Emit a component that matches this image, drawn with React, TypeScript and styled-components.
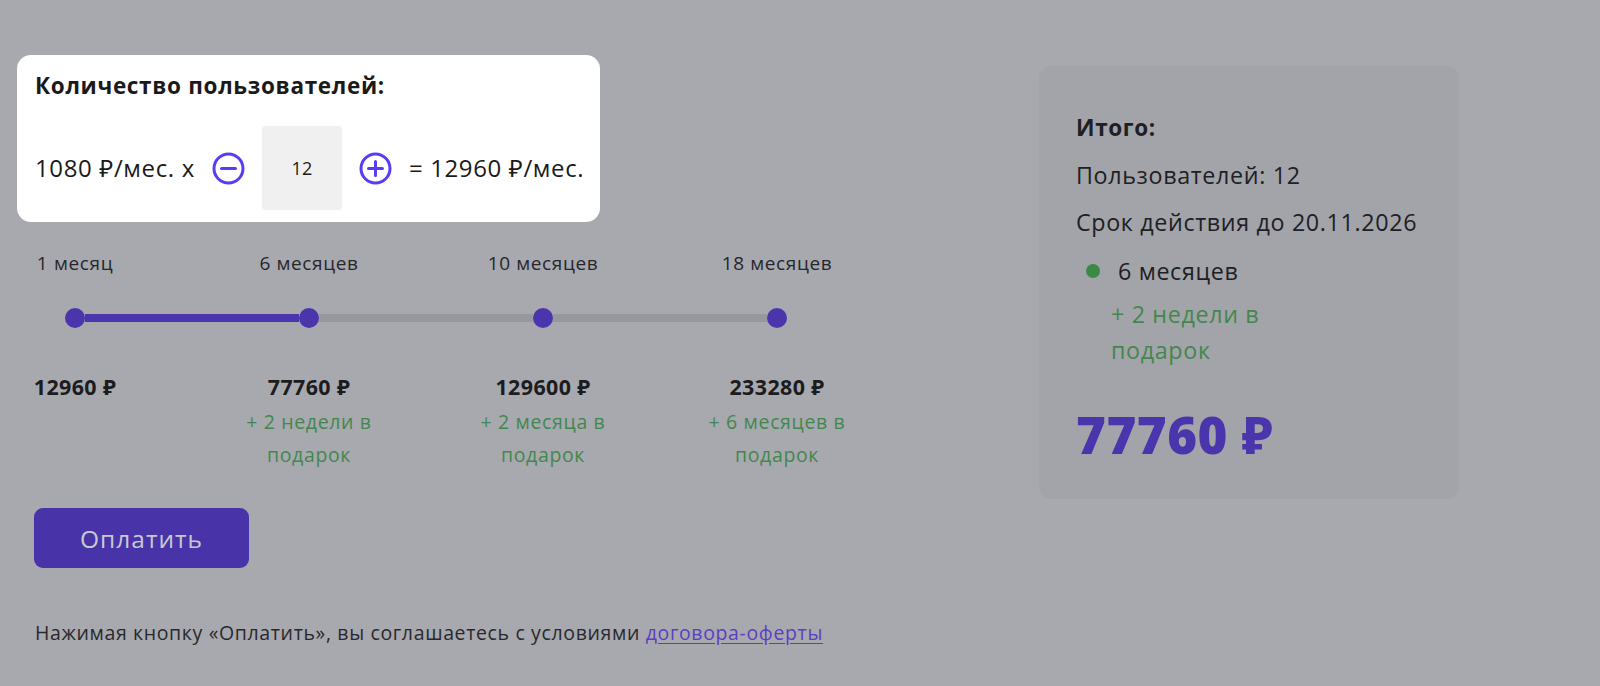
import React from 'react'
import styled, { createGlobalStyle } from 'styled-components'

const PURPLE = '#4a35ad'
const ICON = '#5b3cf5'
const GREEN = '#43874d'
const TEXT = '#202024'

const steps = [
    { label: '1 месяц', price: '12960 ₽', gift: '' },
    { label: '6 месяцев', price: '77760 ₽', gift: '+ 2 недели в подарок' },
    { label: '10 месяцев', price: '129600 ₽', gift: '+ 2 месяца в подарок' },
    { label: '18 месяцев', price: '233280 ₽', gift: '+ 6 месяцев в подарок' },
]
const activeStep = 1

const GlobalStyle = createGlobalStyle`
    html, body {
        margin: 0;
        padding: 0;
        background: #a8a9ae;
    }
    body {
        font-family: "Open Sans", "Noto Sans", sans-serif;
        letter-spacing: 0.04em;
        color: ${TEXT};
        height: 686px;
        overflow: hidden;
    }
`

const MinusIcon = () => (
    <svg width="33" height="33" viewBox="0 0 33 33" fill="none">
        <circle cx="16.5" cy="16.5" r="14.5" stroke={ICON} strokeWidth="3" />
        <path d="M9.5 16.5h14" stroke={ICON} strokeWidth="3" strokeLinecap="round" />
    </svg>
)

const PlusIcon = () => (
    <svg width="33" height="33" viewBox="0 0 33 33" fill="none">
        <circle cx="16.5" cy="16.5" r="14.5" stroke={ICON} strokeWidth="3" />
        <path d="M9.5 16.5h14M16.5 9.5v14" stroke={ICON} strokeWidth="3" strokeLinecap="round" />
    </svg>
)

const App = () => {
    return (
        <Page>
            <GlobalStyle />
            <LeftColumn>
                <UsersCard>
                    <CardTitle>Количество пользователей:</CardTitle>
                    <CounterRow>
                        <RowText>1080 ₽/мес. x</RowText>
                        <IconButton type="button" aria-label="minus"><MinusIcon /></IconButton>
                        <CountBox>12</CountBox>
                        <IconButton type="button" aria-label="plus"><PlusIcon /></IconButton>
                        <RowText>= 12960 ₽/мес.</RowText>
                    </CounterRow>
                </UsersCard>

                <Steps offset={28}>
                    {steps.map((s) => (
                        <StepLabel key={s.label}>{s.label}</StepLabel>
                    ))}
                </Steps>

                <Slider>
                    {steps.map((s, i) => (
                        <React.Fragment key={s.label}>
                            {i > 0 && <Segment filled={i <= activeStep} />}
                            <Dot />
                        </React.Fragment>
                    ))}
                </Slider>

                <Steps offset={47}>
                    {steps.map((s) => (
                        <StepInfo key={s.label}>
                            <StepPrice>{s.price}</StepPrice>
                            {s.gift && <StepGift>{s.gift}</StepGift>}
                        </StepInfo>
                    ))}
                </Steps>

                <PayButton type="button">Оплатить</PayButton>

                <Disclaimer>
                    Нажимая кнопку «Оплатить», вы соглашаетесь с условиями <OfferLink href="#">договора-оферты</OfferLink>
                </Disclaimer>
            </LeftColumn>

            <Summary>
                <SummaryTitle>Итого:</SummaryTitle>
                <SummaryLine>Пользователей: 12</SummaryLine>
                <SummaryLine>Срок действия до 20.11.2026</SummaryLine>
                <PeriodRow>
                    <GreenDot />
                    <SummaryLine>6 месяцев</SummaryLine>
                </PeriodRow>
                <SummaryGift>+ 2 недели в<br />подарок</SummaryGift>
                <Total>77760 ₽</Total>
            </Summary>
        </Page>
    )
}

/* LAYOUT */

const Page = styled.div`
    display: flex;
    align-items: flex-start;
    padding: 55px 0 0 17px;
`

const LeftColumn = styled.div`
    display: flex;
    flex-direction: column;
    align-items: flex-start;
    width: 850px;
    flex-shrink: 0;
`

/* USERS CARD */

const UsersCard = styled.div`
    width: 583px;
    box-sizing: border-box;
    background: #fff;
    border-radius: 14px;
    padding: 17px 18px 12px;
    color: #1a1a1a;
`

const CardTitle = styled.div`
    font-weight: 700;
    font-size: 22.5px;
    line-height: 28px;
    letter-spacing: 0.03em;
`

const CounterRow = styled.div`
    display: flex;
    align-items: center;
    gap: 17px;
    margin-top: 26px;
`

const RowText = styled.span`
    font-size: 24px;
    line-height: 28px;
    white-space: nowrap;
`

const IconButton = styled.button`
    display: flex;
    padding: 0;
    border: none;
    background: transparent;
    cursor: pointer;
`

const CountBox = styled.div`
    display: flex;
    align-items: center;
    justify-content: center;
    width: 80px;
    height: 84px;
    flex-shrink: 0;
    background: #f0f0f0;
    border-radius: 4px;
    font-size: 18px;
    letter-spacing: 0;
`

/* TIMELINE */

const Steps = styled.div<{ offset: number }>`
    display: flex;
    gap: 154px;
    padding-left: 18px;
    margin-top: ${({ offset }) => offset}px;
`

const StepLabel = styled.div`
    display: flex;
    justify-content: center;
    width: 80px;
    flex-shrink: 0;
    font-size: 19px;
    line-height: 26px;
    white-space: nowrap;
    color: #26262b;
`

const Slider = styled.div`
    display: flex;
    align-items: center;
    margin: 32px 0 0 48px;
`

const Dot = styled.div`
    width: 20px;
    height: 20px;
    border-radius: 50%;
    background: ${PURPLE};
    flex-shrink: 0;
`

const Segment = styled.div<{ filled?: boolean }>`
    width: 214px;
    height: 8px;
    flex-shrink: 0;
    background: ${({ filled }) => (filled ? PURPLE : '#97989d')};
`

const StepInfo = styled.div`
    display: flex;
    flex-direction: column;
    align-items: center;
    width: 80px;
    flex-shrink: 0;
`

const StepPrice = styled.div`
    font-weight: 700;
    font-size: 21.4px;
    line-height: 24px;
    letter-spacing: 0.02em;
    white-space: nowrap;
    color: #1c1c20;
`

const StepGift = styled.div`
    width: 170px;
    flex-shrink: 0;
    margin-top: 6px;
    text-align: center;
    font-size: 19.5px;
    line-height: 33px;
    color: ${GREEN};
`

const PayButton = styled.button`
    width: 215px;
    height: 60px;
    margin: 37px 0 0 17px;
    border: none;
    border-radius: 9px;
    background: #4833a8;
    color: #c9c9d0;
    font-family: inherit;
    letter-spacing: 0.04em;
    font-size: 24.5px;
    cursor: pointer;
`

const Disclaimer = styled.p`
    margin: 52px 0 0 18px;
    font-size: 19.5px;
    line-height: 26px;
    white-space: nowrap;
    color: #28282d;
`

const OfferLink = styled.a`
    color: #5a3fc2;
    text-decoration: underline;
    text-underline-offset: 3px;
`

/* SUMMARY */

const Summary = styled.div`
    display: flex;
    flex-direction: column;
    align-items: flex-start;
    width: 420px;
    height: 433px;
    box-sizing: border-box;
    margin: 11px 0 0 172px;
    padding: 44px 37px 35px;
    background: #a3a4a9;
    border-radius: 12px;
`

const SummaryTitle = styled.div`
    font-weight: 700;
    font-size: 22.5px;
    line-height: 36px;
`

const SummaryLine = styled.div`
    font-size: 23.3px;
    line-height: 36px;
    margin-top: 11px;
    white-space: nowrap;
`

const PeriodRow = styled.div`
    display: flex;
    align-items: center;
    gap: 18px;
    margin-top: 2px;
    padding-left: 10px;
`

const GreenDot = styled.span`
    width: 14px;
    height: 14px;
    margin-top: 11px;
    border-radius: 50%;
    background: #3a8a45;
`

const SummaryGift = styled.div`
    margin: 7px 0 0 35px;
    font-size: 23.3px;
    line-height: 36px;
    color: ${GREEN};
`

const Total = styled.div`
    margin-top: 36px;
    font-weight: 800;
    font-size: 51px;
    line-height: 60px;
    letter-spacing: 0.01em;
    color: ${PURPLE};
`

export default App
